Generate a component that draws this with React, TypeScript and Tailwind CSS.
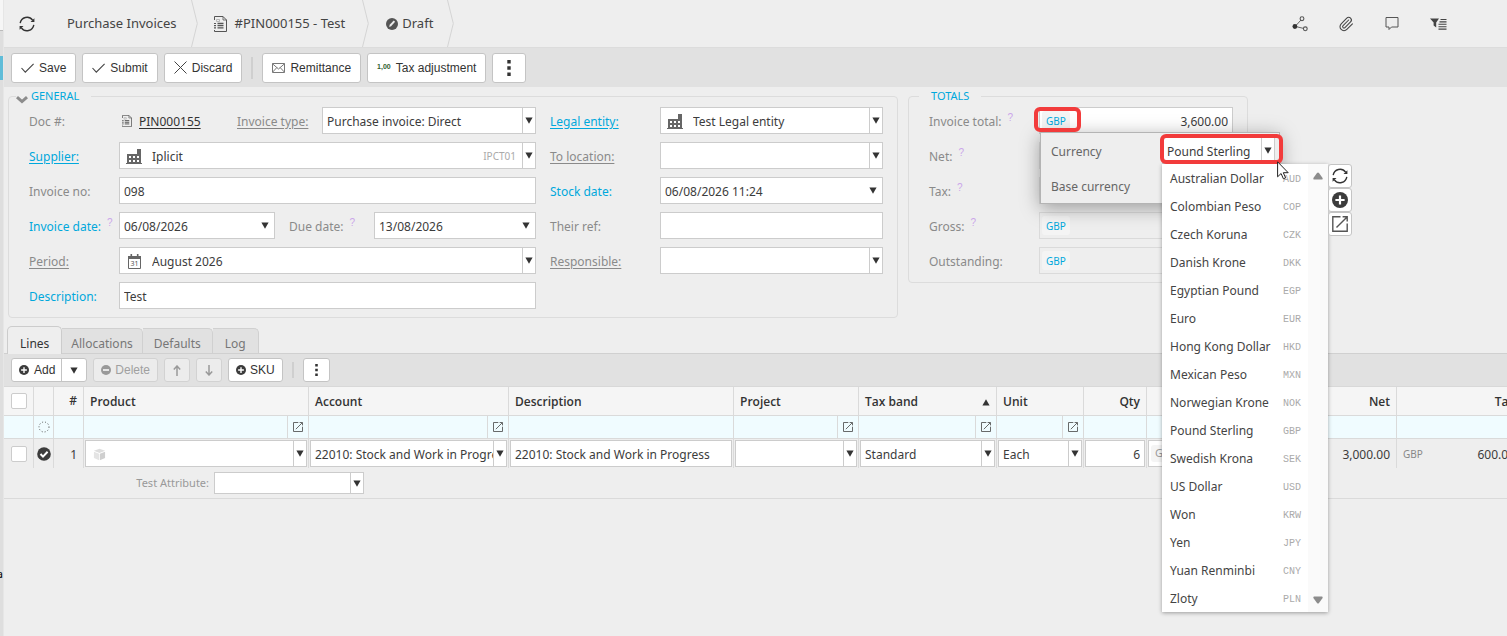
import { useState } from "react";
import type { ReactNode } from "react";
import { clsx } from "clsx";
import { Paperclip } from "lucide-react";

const currencies = [
  ["Australian Dollar", "AUD"],
  ["Colombian Peso", "COP"],
  ["Czech Koruna", "CZK"],
  ["Danish Krone", "DKK"],
  ["Egyptian Pound", "EGP"],
  ["Euro", "EUR"],
  ["Hong Kong Dollar", "HKD"],
  ["Mexican Peso", "MXN"],
  ["Norwegian Krone", "NOK"],
  ["Pound Sterling", "GBP"],
  ["Swedish Krona", "SEK"],
  ["US Dollar", "USD"],
  ["Won", "KRW"],
  ["Yen", "JPY"],
  ["Yuan Renminbi", "CNY"],
  ["Zloty", "PLN"],
];

/* ---------- icons ---------- */

function Triangle({ up = false }: { up?: boolean }) {
  return (
    <svg viewBox="0 0 8 7" className={clsx("h-[7px] w-2 shrink-0 fill-[#333]", up && "rotate-180")}>
      <path d="M0.4 0.5h7.2L4 6.8z" />
    </svg>
  );
}

function ScrollArrow({ up = false }: { up?: boolean }) {
  return (
    <svg viewBox="0 0 10 8" className={clsx("h-2 w-[10px] shrink-0 fill-[#8c8c8c]", up && "rotate-180")}>
      <path d="M1 0.5h8q1 0 0.6 1.6L6 7q-1 1-2 0L0.4 2.1Q0 0.5 1 0.5z" />
    </svg>
  );
}

function RefreshIcon() {
  return (
    <svg viewBox="0 0 16 16" className="h-4 w-4 shrink-0" fill="none" stroke="#333" strokeWidth="1.4">
      <path d="M1.2 7.2A6.9 6.9 0 0 1 13.6 4.2M14.8 8.8A6.9 6.9 0 0 1 2.4 11.8" />
      <path d="M15.4 2.2v3.9h-3.9zM0.6 13.8V9.9h3.9z" fill="#333" stroke="none" />
    </svg>
  );
}

function DocIcon({ className = "" }: { className?: string }) {
  return (
    <svg viewBox="0 0 13 16" className={clsx("shrink-0", className)} fill="none" stroke="#555">
      <path d="M0.5 4V0.5h8.5l3.5 3.5v11.5h-12V14" />
      <path d="M9 0.5V4h3.5" strokeWidth="0.8" />
      <path d="M2.5 3.5h3v2h-3z" stroke="#aaa" strokeWidth="0.8" />
      <path d="M0 7.5h2M0 9.7h2M0 11.9h2" strokeWidth="1.2" />
      <path d="M3.5 7.5h6M3.5 9.7h6M3.5 11.9h6" strokeWidth="1.3" />
    </svg>
  );
}

function FactoryIcon() {
  return (
    <svg viewBox="0 0 16 15" className="h-[15px] w-4 shrink-0">
      <path d="M0 14h1V5h10V0h4v14h1v1H0z" fill="#666" />
      <path d="M3 7h2v2H3zM7 7h2v2H7zM11 7h2v2h-2zM3 11h2v2H3zM7 11h2v2H7zM11 11h2v2h-2z" fill="#fff" />
    </svg>
  );
}

function CalendarIcon() {
  return (
    <svg viewBox="0 0 13 15" className="h-[15px] w-[13px] shrink-0">
      <path d="M0.5 2.5h12v12H0.5z" fill="none" stroke="#666" />
      <path d="M0 2h13v3H0zM2.5 0h1.6v3H2.5zM8.9 0h1.6v3H8.9z" fill="#666" />
      <text x="6.5" y="12" fontSize="7" textAnchor="middle" fill="#555" className="font-['Noto_Sans',sans-serif]">31</text>
    </svg>
  );
}

function CheckIcon() {
  return (
    <svg viewBox="0 0 13 10" className="h-[10px] w-[13px] shrink-0" fill="none" stroke="#444" strokeWidth="1.1">
      <path d="M0.5 5l3.8 4.2L12.6 0.8" />
    </svg>
  );
}

function CrossIcon() {
  return (
    <svg viewBox="0 0 13 13" className="h-[13px] w-[13px] shrink-0" fill="none" stroke="#444">
      <path d="M0.5 0.5l12 12M12.5 0.5l-12 12" />
    </svg>
  );
}

function MailIcon() {
  return (
    <svg viewBox="0 0 13 10" className="h-[10px] w-[13px] shrink-0" fill="none" stroke="#777">
      <path d="M0.5 0.5h12v9H0.5zM0.5 0.8L6.5 6l6-5.2M0.5 9.2l4.3-4.6M12.5 9.2L8.2 4.6" />
    </svg>
  );
}

function DotsIcon({ className = "" }: { className?: string }) {
  return (
    <svg viewBox="0 0 4 16" className={clsx("shrink-0 fill-[#333]", className)}>
      <path d="M0.3 0h3.4v3.4H0.3zM0.3 6.3h3.4v3.4H0.3zM0.3 12.6h3.4V16H0.3z" />
    </svg>
  );
}

function PlusCircle({ className = "" }: { className?: string }) {
  return (
    <svg viewBox="0 0 16 16" className={clsx("shrink-0", className)}>
      <circle cx="8" cy="8" r="8" fill="#3c3c3c" />
      <path d="M6.9 3.4h2.2v3.5h3.5v2.2H9.1v3.5H6.9V9.1H3.4V6.9h3.5z" fill="#fff" />
    </svg>
  );
}

function MinusCircle() {
  return (
    <svg viewBox="0 0 16 16" className="h-[10px] w-[10px] shrink-0">
      <circle cx="8" cy="8" r="8" fill="#999" />
      <path d="M3.2 6.6h9.6v2.8H3.2z" fill="#f0f0f0" />
    </svg>
  );
}

function ArrowIcon({ down = false }: { down?: boolean }) {
  return (
    <svg viewBox="0 0 8 11" className={clsx("h-[11px] w-2 shrink-0", down && "rotate-180")} fill="none" stroke="#999" strokeWidth="1.5">
      <path d="M4 11V1M0.8 4.4L4 1l3.2 3.4" />
    </svg>
  );
}

function OpenIcon({ className = "" }: { className?: string }) {
  return (
    <svg viewBox="0 0 16 16" className={clsx("shrink-0", className)} fill="none" stroke="#555" strokeWidth="1.4">
      <path d="M8.5 0.8H0.8v14.4h14.4V7.5M4.5 11.5L14.8 1.2M10.6 0.8h4.6v4.6" />
    </svg>
  );
}

/* ---------- small building blocks ---------- */

const box = "border border-[#ccc] bg-white text-[#3c3c3c]";

function Help() {
  return <sup className="top-0 self-start font-['Liberation_Sans',sans-serif] text-[10px] leading-[18px] text-[#cba6ea]">?</sup>;
}

type LabelProps = { htmlFor: string; children: ReactNode; tone?: "grey" | "blue"; link?: boolean; help?: boolean };

function Label({ htmlFor, children, tone = "grey", link = false, help = false }: LabelProps) {
  return (
    <div className="flex h-[27px] items-center gap-[6px] whitespace-nowrap pt-[2px]">
      <label
        htmlFor={htmlFor}
        className={clsx(tone === "blue" ? "text-[#00a8dc]" : "text-[#8a8a8a]", link && "underline underline-offset-2")}
      >
        {children}
      </label>
      {help && <Help />}
    </div>
  );
}

type SelectProps = { id: string; value?: string; label?: string; icon?: ReactNode; code?: string; className?: string };

function Select({ id, value = "", label, icon, code, className = "h-[27px]" }: SelectProps) {
  return (
    <div className={clsx("relative flex w-full min-w-0", box, className)}>
      {icon && <span className="flex w-7 shrink-0 items-center pl-[6px] pt-px">{icon}</span>}
      <select
        id={id}
        aria-label={label}
        defaultValue={value}
        className="min-w-0 flex-1 appearance-none overflow-hidden bg-transparent pl-1 pt-[2px] text-clip outline-none"
      >
        <option>{value}</option>
      </select>
      {code && <span className="self-center pr-[6px] pt-[2px] text-[10px] text-[#aaa]">{code}</span>}
      <span className="pointer-events-none flex w-[13px] shrink-0 items-center justify-center border-l border-[#ccc]">
        <Triangle />
      </span>
    </div>
  );
}

function TextInput({ id, value = "" }: { id: string; value?: string }) {
  return <input id={id} type="text" defaultValue={value} className={clsx("h-[27px] w-full min-w-0 px-1 pt-[2px] outline-none", box)} />;
}

function DateInput({ id, value }: { id: string; value: string }) {
  return (
    <div className={clsx("flex h-[27px] w-full min-w-0", box)}>
      <input id={id} type="text" defaultValue={value} className="min-w-0 flex-1 pl-1 pt-[2px] outline-none" />
      <button type="button" aria-label="Open calendar" className="flex w-[18px] items-center justify-center">
        <Triangle />
      </button>
    </div>
  );
}

function ToolButton({ children, label, disabled = false, small = false }: { children: ReactNode; label?: string; disabled?: boolean; small?: boolean }) {
  return (
    <button
      type="button"
      aria-label={label}
      disabled={disabled}
      className={clsx(
        "flex items-center justify-center rounded-[3px] border whitespace-nowrap",
        small ? "h-6 gap-1 px-[7px]" : "h-[30px] gap-[5px] px-[9px]",
        disabled ? "border-[#d2d2d2] bg-[#ececec] text-[#a0a0a0]" : "border-[#c4c4c4] bg-white text-[#333]",
      )}
    >
      {children}
    </button>
  );
}

function Crumb({ children, className = "" }: { children: ReactNode; className?: string }) {
  return (
    <li className="flex">
      <span className={clsx("flex items-center", className)}>{children}</span>
      <svg viewBox="0 0 7 47" className="h-[47px] w-[7px]" fill="none" stroke="#d4d4d4">
        <path d="M0.5 0L6.3 23.5 0.5 47" />
      </svg>
    </li>
  );
}

/* ---------- page sections ---------- */

function Header() {
  return (
    <header className="flex h-12 items-stretch border-b border-[#dcdcdc] text-[13px] text-[#444]">
      <button type="button" aria-label="Refresh" className="flex w-[46px] items-center justify-center">
        <RefreshIcon />
      </button>
      <ol className="flex whitespace-nowrap">
        <Crumb className="pl-[17px] pr-[14px]">
          <a href="#invoices">Purchase Invoices</a>
        </Crumb>
        <Crumb className="gap-2 pl-4 pr-[17px]">
          <DocIcon className="h-4 w-[13px]" />
          <span>#PIN000155 - Test</span>
        </Crumb>
        <Crumb className="gap-1 pl-[17px] pr-[14px]">
          <svg viewBox="0 0 12 12" className="h-3 w-3">
            <circle cx="6" cy="6" r="6" fill="#555" />
            <path d="M3.2 9l0.5-2.2L7.7 2.4l1.4 1.3-4 4.5z" fill="#eee" />
          </svg>
          <span>Draft</span>
        </Crumb>
      </ol>
      <nav className="ml-auto flex items-center gap-[30px] pr-[60px]">
        <button type="button" aria-label="Workflow">
          <svg viewBox="0 0 16 16" className="h-4 w-4" fill="none" stroke="#555">
            <path d="M3.5 10L9 4M4 10.6l7.5 1.8" strokeWidth="0.9" />
            <circle cx="10" cy="2.7" r="1.9" strokeWidth="1.1" />
            <circle cx="13.3" cy="12.8" r="1.9" strokeWidth="1.1" />
            <circle cx="2.9" cy="10.5" r="2.4" fill="#333" stroke="none" />
          </svg>
        </button>
        <button type="button" aria-label="Attachments">
          <Paperclip size={16} strokeWidth={1.6} />
        </button>
        <button type="button" aria-label="Comments">
          <svg viewBox="0 0 16 16" className="h-4 w-4" fill="none" stroke="#555">
            <path d="M2 1.5h12v9.5H7.5L5 13.5V11H2z" />
          </svg>
        </button>
        <button type="button" aria-label="Filter">
          <svg viewBox="0 0 17 14" className="h-[14px] w-[17px]" fill="#444">
            <path d="M0 1.5h9L6.2 5.4v5L3.6 8.4v-3z" />
            <path d="M10.5 2.5h6M9.5 4.9h7M8.5 7.3h8M8.5 9.7h8M8.5 12.1h8" stroke="#444" strokeWidth="1.1" />
          </svg>
        </button>
      </nav>
    </header>
  );
}

function Toolbar() {
  return (
    <div className="flex h-[39px] items-center gap-[6px] bg-[#e1e1e1] pl-[7px] font-['Liberation_Sans',sans-serif] text-[12px]">
      <ToolButton><CheckIcon /><span>Save</span></ToolButton>
      <ToolButton><CheckIcon /><span>Submit</span></ToolButton>
      <ToolButton><CrossIcon /><span>Discard</span></ToolButton>
      <span className="mx-[3px] h-[22px] w-[2px] bg-[#cfcfcf]" />
      <ToolButton><MailIcon /><span>Remittance</span></ToolButton>
      <ToolButton>
        <span className="text-[7px] font-bold text-[#2f5d2f]">1,00</span>
        <span>Tax adjustment</span>
      </ToolButton>
      <ToolButton label="More actions"><DotsIcon className="mx-[5px] h-4 w-1" /></ToolButton>
    </div>
  );
}

function General() {
  return (
    <fieldset className="min-w-0 max-w-[890px] flex-1 rounded-[4px] border border-[#dcdcdc] pb-2 pl-5 pr-[14px]">
      <legend className="-ml-[13px] flex h-[17px] items-center gap-[3px] pr-3 text-[11px] text-[#00a8dc]">
        <svg viewBox="0 0 12 8" className="mt-[6px] h-2 w-3" fill="none" stroke="#8c8c8c" strokeWidth="3">
          <path d="M1 1.2l5 4.4 5-4.4" />
        </svg>
        GENERAL
      </legend>
      <div className="flex gap-[14px] pt-[2px]">
        <div className="grid min-w-0 flex-1 grid-cols-[90px_minmax(0,1fr)] gap-y-2">
          <Label htmlFor="doc">Doc #:</Label>
          <div className="flex items-center">
            <DocIcon className="ml-[3px] h-3 w-[10px]" />
            <a id="doc" href="#doc" className="ml-[7px] pt-[2px] text-[#333] underline underline-offset-2">PIN000155</a>
            <div className="ml-auto flex w-[299px]">
              <div className="w-[85px] shrink-0"><Label htmlFor="type" link>Invoice type:</Label></div>
              <Select id="type" value="Purchase invoice: Direct" />
            </div>
          </div>
          <Label htmlFor="supplier" tone="blue" link>Supplier:</Label>
          <Select id="supplier" value="Iplicit" icon={<FactoryIcon />} code="IPCT01" />
          <Label htmlFor="invno">Invoice no:</Label>
          <TextInput id="invno" value="098" />
          <Label htmlFor="invdate" tone="blue" help>Invoice date:</Label>
          <div className="flex gap-[14px]">
            <div className="min-w-0 flex-1"><DateInput id="invdate" value="06/08/2026" /></div>
            <div className="flex w-[247px]">
              <div className="w-[85px] shrink-0"><Label htmlFor="due" help>Due date:</Label></div>
              <DateInput id="due" value="13/08/2026" />
            </div>
          </div>
          <Label htmlFor="period" link>Period:</Label>
          <Select id="period" value="August 2026" icon={<span className="pl-[2px]"><CalendarIcon /></span>} />
          <Label htmlFor="desc" tone="blue">Description:</Label>
          <TextInput id="desc" value="Test" />
        </div>
        <div className="grid w-[333px] shrink-0 grid-cols-[110px_minmax(0,1fr)] content-start gap-y-2">
          <Label htmlFor="entity" tone="blue" link>Legal entity:</Label>
          <Select id="entity" value="Test Legal entity" icon={<FactoryIcon />} />
          <Label htmlFor="location" link>To location:</Label>
          <Select id="location" />
          <Label htmlFor="stock" tone="blue">Stock date:</Label>
          <DateInput id="stock" value="06/08/2026 11:24" />
          <Label htmlFor="ref">Their ref:</Label>
          <TextInput id="ref" />
          <Label htmlFor="responsible" link>Responsible:</Label>
          <Select id="responsible" />
        </div>
      </div>
    </fieldset>
  );
}

function CurrencyList({ selected, onSelect }: { selected: string; onSelect: (name: string) => void }) {
  const side = "flex h-6 w-6 items-center justify-center rounded-[3px] border border-[#c4c4c4] bg-white";

  return (
    <div className="absolute left-0 top-full z-20 flex items-start">
      <div className="flex w-[166px] bg-white shadow-[0_1px_4px_rgba(0,0,0,0.35)]">
        <ul role="listbox" aria-label="Currencies" className="flex-1">
          {currencies.map(([name, code]) => (
            <li
              key={code}
              role="option"
              aria-selected={name === selected}
              onClick={() => onSelect(name)}
              className="flex h-7 items-center justify-between whitespace-nowrap pl-2 pr-[7px] pt-[2px] text-[#444]"
            >
              {name}
              <span className="font-['Liberation_Mono',monospace] text-[10px] text-[#aaa]">{code}</span>
            </li>
          ))}
        </ul>
        <div className="flex w-5 flex-col items-center justify-between bg-[#fafafa] py-2">
          <ScrollArrow up />
          <ScrollArrow />
        </div>
      </div>
      <div className="flex flex-col">
        <button type="button" aria-label="Reload currencies" className={side}><RefreshIcon /></button>
        <button type="button" aria-label="Add currency" className={side}><PlusCircle className="h-4 w-4" /></button>
        <button type="button" aria-label="Open currency" className={side}><OpenIcon className="h-4 w-4" /></button>
      </div>
    </div>
  );
}

function CurrencyPopup() {
  const [currency, setCurrency] = useState("Pound Sterling");

  return (
    <div className="absolute left-0 top-6 z-10 grid w-[240px] grid-cols-[minmax(0,1fr)_113px] gap-y-2 border border-[#b4b4b4] bg-[#eee] pb-1 pl-[10px] pr-1 pt-1 text-[#666] shadow-[0_4px_18px_rgba(0,0,0,0.35)]">
      <label htmlFor="currency" className="self-center pt-[2px]">Currency</label>
      <div className="relative">
        <Select key={currency} id="currency" value={currency} />
        <span className="pointer-events-none absolute -left-[2px] -right-2 -top-[3px] bottom-0 z-30 rounded-[6px] border-4 border-[#f23b3b]" />
        <CurrencyList selected={currency} onSelect={setCurrency} />
        <svg viewBox="0 0 12 19" className="pointer-events-none absolute -right-[14px] top-6 z-40 h-[19px] w-3">
          <path d="M0.6 0.8v15l3.5-3.3 2.3 5.3 2.2-1-2.3-5.1h4.9z" fill="#fff" stroke="#222" />
        </svg>
      </div>
      <label htmlFor="base" className="self-center pt-[2px]">Base currency</label>
      <input id="base" type="text" className="h-[27px] w-full border border-[#d4d4d4] bg-[#eee]" />
    </div>
  );
}

const totals = [
  { id: "total", label: "Invoice total:", help: true },
  { id: "net", label: "Net:", help: true },
  { id: "tax", label: "Tax:", help: true },
  { id: "gross", label: "Gross:", help: true },
  { id: "outstanding", label: "Outstanding:", help: false },
];

function Totals() {
  return (
    <fieldset className="w-[340px] shrink-0 self-start rounded-[4px] border border-[#dcdcdc] pb-2 pl-5 pr-[14px]">
      <legend className="-ml-[10px] flex h-[17px] items-center px-3 text-[11px] text-[#00a8dc]">TOTALS</legend>
      <div className="grid grid-cols-[110px_minmax(0,1fr)] gap-y-2 pt-[2px]">
        {totals.map((row, idx) => (
          <div key={row.id} className="contents">
            <Label htmlFor={row.id} help={row.help}>{row.label}</Label>
            <div className={clsx("relative flex h-[27px] items-center border", idx === 0 ? "border-[#ccc] bg-white" : "border-[#dadada]")}>
              <button type="button" className="ml-[2px] h-[19px] rounded-[3px] bg-[#f4f4f4] px-1 pt-px text-[10px] text-[#00a8dc]">GBP</button>
              <input
                id={row.id}
                type="text"
                readOnly={idx > 0}
                defaultValue={idx === 0 ? "3,600.00" : ""}
                className="min-w-0 flex-1 pr-1 pt-[2px] text-right text-[#3c3c3c] outline-none"
              />
              {idx === 0 && (
                <>
                  <span className="pointer-events-none absolute -left-[6px] -top-px z-20 h-[25px] w-[47px] rounded-[6px] border-4 border-[#f23b3b]" />
                  <CurrencyPopup />
                </>
              )}
            </div>
          </div>
        ))}
      </div>
    </fieldset>
  );
}

function Tabs() {
  const tabs = [
    { title: "Allocations", pad: "px-[9px]" },
    { title: "Defaults", pad: "px-[11px]" },
    { title: "Log", pad: "px-3" },
  ];

  return (
    <div role="tablist" className="flex h-[27px] items-end border-b border-[#d0d0d0] pl-[3px]">
      <button role="tab" aria-selected="true" className="relative -mb-px h-7 rounded-t-[5px] border border-b-0 border-[#ccc] bg-[#eee] px-3 pt-[6px] text-[#333]">
        Lines
      </button>
      {tabs.map((tab) => (
        <button
          key={tab.title}
          role="tab"
          aria-selected="false"
          className={clsx("h-[25px] rounded-tr-[5px] border border-b-0 border-l-0 border-[#d0d0d0] bg-[#e1e1e1] pt-[6px] text-[#777]", tab.pad)}
        >
          {tab.title}
        </button>
      ))}
    </div>
  );
}

function GridToolbar() {
  return (
    <div className="flex h-8 items-center gap-[6px] bg-[#e1e1e1] pl-[7px] font-['Liberation_Sans',sans-serif] text-[12px]">
      <div className="flex h-6 rounded-[3px] border border-[#c4c4c4] bg-white text-[#333]">
        <button type="button" className="flex items-center gap-[5px] pl-[7px] pr-[6px]"><PlusCircle className="h-[10px] w-[10px]" />Add</button>
        <button type="button" aria-label="Add options" className="flex w-[25px] items-center justify-center border-l border-[#c4c4c4]">
          <Triangle />
        </button>
      </div>
      <ToolButton small disabled><MinusCircle /><span>Delete</span></ToolButton>
      <ToolButton small disabled label="Move up"><span className="px-[1px]"><ArrowIcon /></span></ToolButton>
      <ToolButton small disabled label="Move down"><span className="px-[1px]"><ArrowIcon down /></span></ToolButton>
      <ToolButton small><PlusCircle className="h-[10px] w-[10px]" /><span>SKU</span></ToolButton>
      <span className="mx-[3px] h-4 w-[2px] bg-[#cfcfcf]" />
      <ToolButton small label="More line actions"><DotsIcon className="mx-1 h-3 w-[3px]" /></ToolButton>
    </div>
  );
}

const columns = [
  { title: "Product", width: "w-[225px]", open: true },
  { title: "Account", width: "w-[200px]", open: true },
  { title: "Description", width: "w-[225px]" },
  { title: "Project", width: "w-[125px]", open: true },
  { title: "Tax band", width: "w-[138px]", open: true, sorted: true },
  { title: "Unit", width: "w-[87px]", open: true },
  { title: "Qty", width: "w-[63px]", right: true },
  { title: "", width: "w-[125px]" },
  { title: "Net", width: "w-[125px]", right: true },
  { title: "Tax", width: "w-[125px]", right: true },
];

function LinesTable() {
  const cell = "border-r border-[#dadada] p-0";
  const edit = "border-r border-[#dadada] px-px py-0";

  return (
    <div className="overflow-hidden">
      <table className="w-[1518px] table-fixed border-separate border-spacing-0 border-t border-[#d8d8d8]">
        <colgroup>
          <col className="w-[30px]" />
          <col className="w-5" />
          <col className="w-[30px]" />
          {columns.map((col) => <col key={col.title} className={col.width} />)}
        </colgroup>
        <thead className="bg-[#f5f5f5] font-['Open_Sans',sans-serif] text-[#333]">
          <tr className="h-[29px]">
            <th className={clsx(cell, "border-b")}>
              <input type="checkbox" aria-label="Select all" className="mx-auto block h-4 w-4 appearance-none rounded-[2px] border border-[#ccc] bg-white" />
            </th>
            <th className={clsx(cell, "border-b")} />
            <th className={clsx(cell, "border-b pr-[6px] text-right font-semibold")}>#</th>
            {columns.map((col) => (
              <th key={col.title} scope="col" className={clsx(cell, "border-b px-[6px] pt-[2px] font-semibold", col.right ? "text-right" : "text-left")}>
                <div className={clsx("flex items-center", col.right ? "justify-end" : "justify-between")}>
                  {col.title}
                  {col.sorted && <Triangle up />}
                </div>
              </th>
            ))}
          </tr>
        </thead>
        <tbody>
          <tr className="h-[23px] bg-[#f0fcff]">
            <td className={clsx(cell, "border-b")} />
            <td className={clsx(cell, "border-b")}>
              <svg viewBox="0 0 12 12" className="mx-auto block h-3 w-3" fill="none" stroke="#555" strokeDasharray="1 2">
                <circle cx="6" cy="6" r="5" />
              </svg>
            </td>
            <td className={clsx(cell, "border-b")} />
            {columns.map((col) => (
              <td key={col.title} className={clsx(cell, "border-b")}>
                {col.open && (
                  <button type="button" aria-label={`Filter ${col.title}`} className="ml-auto flex h-[22px] w-[21px] items-center justify-center border-l border-[#dadada]">
                    <OpenIcon className="h-[10px] w-[10px]" />
                  </button>
                )}
              </td>
            ))}
          </tr>
          <tr className="h-[29px] text-[#3c3c3c]">
            <td className={cell}>
              <input type="checkbox" aria-label="Select line 1" className="mx-auto block h-4 w-4 appearance-none rounded-[2px] border border-[#ccc] bg-white" />
            </td>
            <td className={cell}>
              <svg viewBox="0 0 14 14" className="mx-auto block h-[14px] w-[14px]">
                <circle cx="7" cy="7" r="6.8" fill="#3c3c3c" />
                <path d="M3.5 7l2.5 2.6 4.6-4.8" fill="none" stroke="#fff" strokeWidth="2" />
              </svg>
            </td>
            <td className={clsx(cell, "pr-[6px] pt-[2px] text-right")}>1</td>
            <td className={edit}>
              <Select
                id="line-product"
                label="Product"
                icon={
                  <svg viewBox="0 0 14 14" className="ml-[1px] h-[13px] w-[13px]">
                    <path d="M7 0.8l6 2.2-6 2.4L1 3z" fill="#ddd" />
                    <path d="M1 4l5.6 2.3v7L1 10.8z" fill="#e4e4e4" />
                    <path d="M13 4L7.4 6.3v7l5.6-2.5z" fill="#cfcfcf" />
                  </svg>
                }
              />
            </td>
            <td className={edit}><Select id="line-account" label="Account" value="22010: Stock and Work in Progress" /></td>
            <td className={edit}>
              <input type="text" aria-label="Description" defaultValue="22010: Stock and Work in Progress" className={clsx("block h-[27px] w-full px-1 pt-[2px] outline-none", box)} />
            </td>
            <td className={edit}><Select id="line-project" label="Project" /></td>
            <td className={edit}><Select id="line-band" label="Tax band" value="Standard" /></td>
            <td className={edit}><Select id="line-unit" label="Unit" value="Each" /></td>
            <td className={edit}>
              <input type="text" aria-label="Qty" defaultValue="6" className={clsx("block h-[27px] w-full px-1 pt-[2px] text-right outline-none", box)} />
            </td>
            <td className={edit}>
              <div className={clsx("flex h-[27px] items-center pl-[2px]", box)}>
                <span className="rounded-[3px] bg-[#f4f4f4] px-1 text-[11px] text-[#999]">GBP</span>
              </div>
            </td>
            <td className={clsx(cell, "pr-[6px] pt-[2px] text-right")}>3,000.00</td>
            <td className={cell}>
              <div className="flex items-center justify-between px-[6px] pt-[2px]">
                <span className="text-[10px] text-[#888]">GBP</span>
                <span>600.00</span>
              </div>
            </td>
          </tr>
          <tr className="h-[31px]">
            <td colSpan={13} className="border-b border-[#dadada] p-0">
              <div className="flex items-center">
                <label htmlFor="attribute" className="w-[205px] text-right text-[11px] text-[#999]">Test Attribute:</label>
                <div className="ml-[5px] w-[150px]"><Select id="attribute" className="h-[22px]" /></div>
              </div>
            </td>
          </tr>
        </tbody>
      </table>
    </div>
  );
}

export default function App() {
  return (
    <div className="flex min-h-screen overflow-x-hidden bg-[#eee] font-['Noto_Sans',sans-serif] text-[12px]">
      <div className="flex w-1 shrink-0 flex-col items-end overflow-hidden border-r border-[#e6e6e6] bg-[#dedede]">
        <div className="h-[31px] w-full shrink-0 border-b border-[#bbb] bg-[#f6f6f6]" />
        <div className="mt-[25px] h-6 w-full shrink-0 bg-[#5fbcd8]" />
        <span className="mt-[486px] text-[11px] leading-4 text-black">a</span>
      </div>
      <main className="min-w-0 flex-1">
        <Header />
        <Toolbar />
        <form className="flex gap-[10px] pb-[9px] pl-1 pt-px">
          <General />
          <Totals />
        </form>
        <Tabs />
        <GridToolbar />
        <LinesTable />
      </main>
    </div>
  );
}
